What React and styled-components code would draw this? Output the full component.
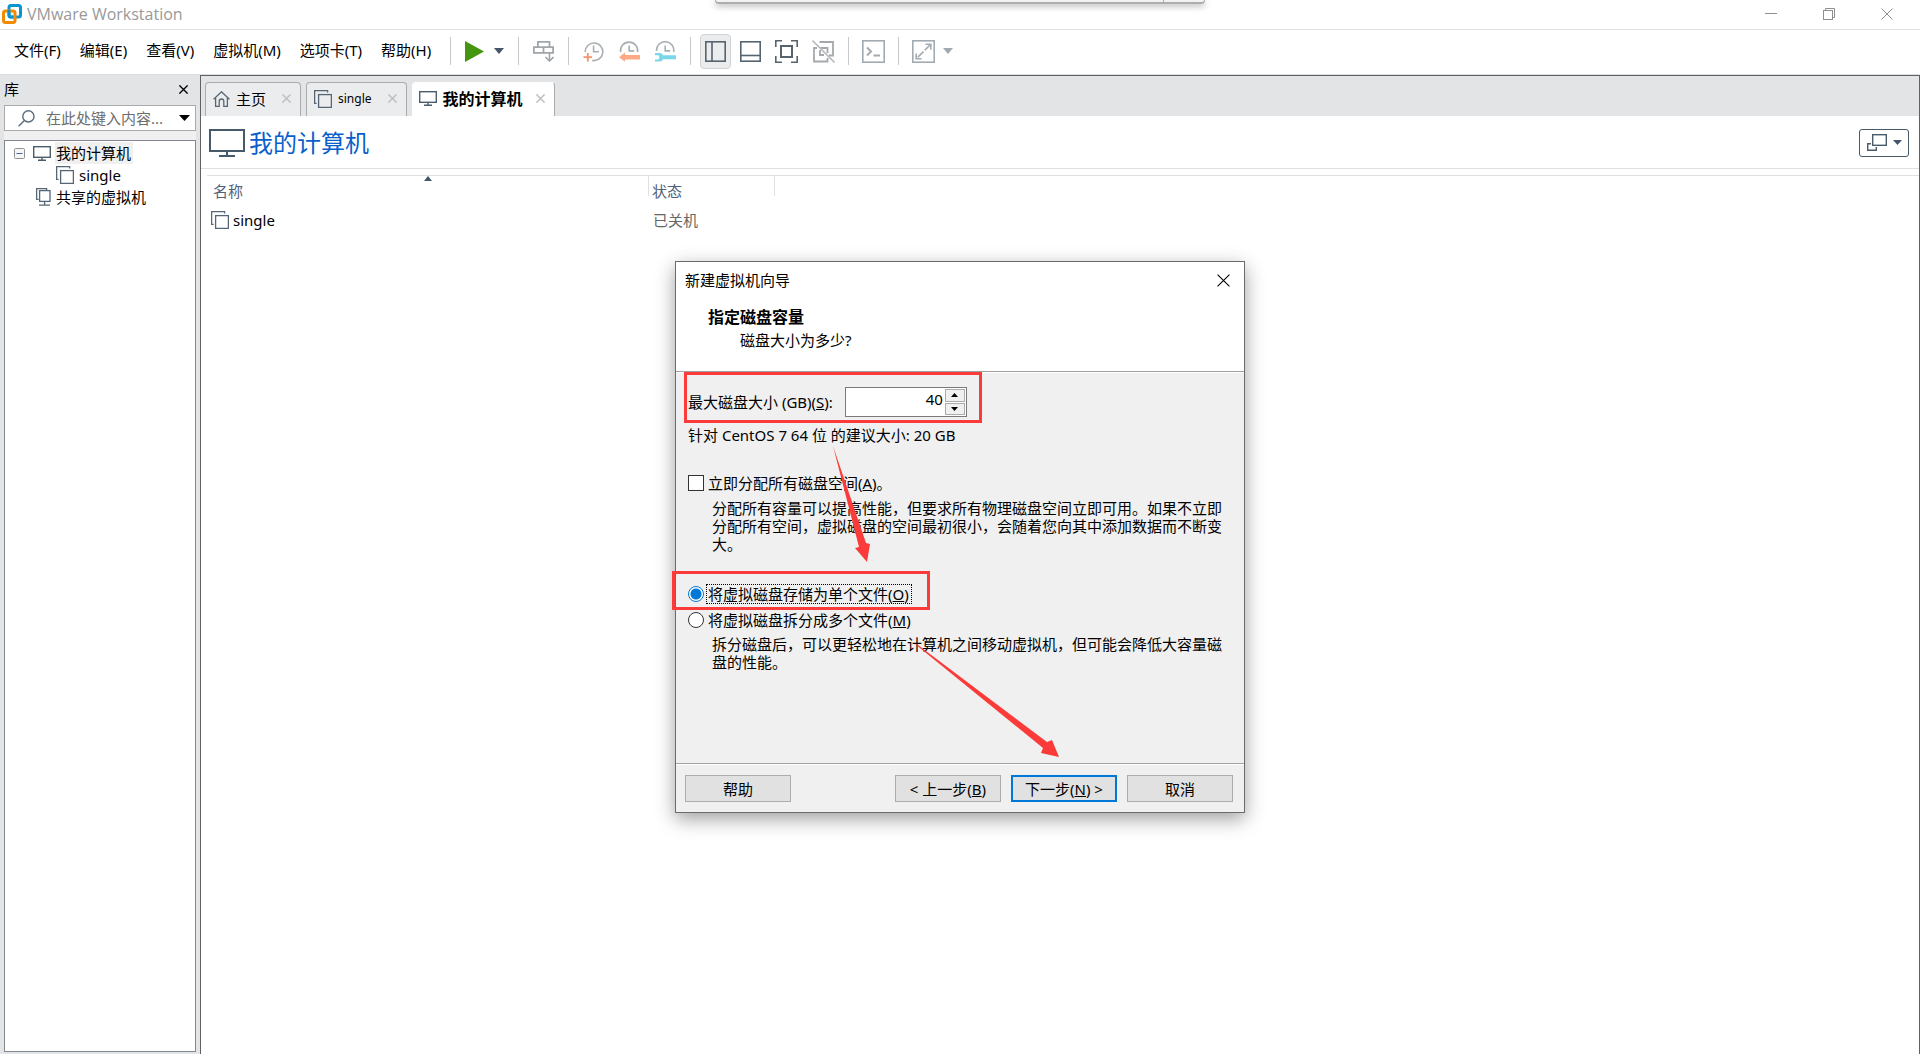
import React from "react";
import styled, { createGlobalStyle, css } from "styled-components";

const GlobalStyle = createGlobalStyle`
  * {
    box-sizing: border-box;
  }

  body {
    margin: 0;
    background: #fff;
    color: #000;
    font-family: "Noto Sans", "Noto Sans CJK SC", sans-serif;
    font-size: 15px;
    line-height: 20px;
  }

  button,
  input {
    font: inherit;
    color: inherit;
  }

  button {
    padding: 0;
    border: 0;
    background: none;
  }

  svg {
    display: block;
    flex: none;
    fill: none;
  }
`;

/* ---------- icons ---------- */

const Logo = () => (
  <svg width="20" height="20" viewBox="0 0 20 20">
    <rect x="7" y="1.5" width="11.5" height="11.5" rx="2" stroke="#0795d3" strokeWidth="3" />
    <rect x="1.5" y="7" width="11.5" height="11.5" rx="2" stroke="#f38b00" strokeWidth="3" />
    <path d="M7 6v5a2 2 0 0 0 2 2h2" stroke="#0795d3" strokeWidth="3" />
  </svg>
);

const Cross = ({ size = 12, color = "#000", width = 1 }) => (
  <svg width={size} height={size} viewBox="0 0 12 12" stroke={color} strokeWidth={width}>
    <path d="M.5.5l11 11M11.5.5l-11 11" />
  </svg>
);

const Caret = ({ color = "#43556a", width = 10, height = 6 }) => (
  <svg width={width} height={height} viewBox="0 0 10 6" preserveAspectRatio="none">
    <path d="M0 0h10L5 6z" fill={color} />
  </svg>
);

const Monitor = () => (
  <svg width="18" height="15" viewBox="0 0 18 15" stroke="#4b5c6b" strokeWidth="1.4">
    <rect x=".7" y=".7" width="16.6" height="10.6" fill="#fff" />
    <path d="M9 11v3M5 14.2h8" />
  </svg>
);

const BigMonitor = () => (
  <svg width="36" height="28" viewBox="0 0 36 28" stroke="#465a69" strokeWidth="2">
    <rect x="1" y="1" width="34" height="21" />
    <path d="M18 22v4M10 27h16" />
  </svg>
);

const Machine = () => (
  <svg width="18" height="18" viewBox="0 0 18 18" stroke="#566675" strokeWidth="1.3">
    <path d="M2.6 13.4H.6V.6h13v2" />
    <rect x="4.6" y="4.6" width="12.8" height="12.8" />
  </svg>
);

const SharedMachine = () => (
  <svg width="15" height="18" viewBox="0 0 15 18" stroke="#566675" strokeWidth="1.3">
    <path d="M2.6 11.4h-2V.6h10v2" />
    <rect x="3.6" y="2.6" width="10.4" height="10.8" />
    <path d="M8.6 13.4v3.4M3 17.2h11" />
  </svg>
);

const Home = () => (
  <svg width="17" height="16" viewBox="0 0 17 16" stroke="#566675" strokeWidth="1.3">
    <path d="M.6 8.2l7.9-7.4 7.9 7.4M2.6 7v8.3h3.6v-5a2.3 2.3 0 0 1 4.6 0v5h3.6V7" />
  </svg>
);

const Search = () => (
  <svg width="17" height="17" viewBox="0 0 17 17" stroke="#5a6b7b" strokeWidth="1.4">
    <circle cx="10.4" cy="6.4" r="5.6" />
    <path d="M6.4 10.6L.6 16.2" />
  </svg>
);

const Collapse = () => (
  <svg width="11" height="11" viewBox="0 0 11 11">
    <rect x=".5" y=".5" width="10" height="10" rx="1" stroke="#919191" fill="#f6f6f6" />
    <path d="M2.5 5.5h6" stroke="#4b63a7" />
  </svg>
);

const Play = () => (
  <svg width="19" height="21" viewBox="0 0 19 21">
    <path d="M0 0l19 10.5L0 21z" fill="#45960f" />
  </svg>
);

const SendKeys = () => (
  <svg width="21" height="21" viewBox="0 0 21 21" stroke="#a0a5a9" strokeWidth="1.8">
    <path d="M4.9 5.500V.9h11.600v4.600M.9 6.100h19.200v5.800H.9zM10.500 6v6" />
    <path d="M16.500 12v7M12.500 16l4 4 4-4" strokeWidth="1.600" />
  </svg>
);

const SnapshotAdd = () => (
  <svg width="21" height="21" viewBox="0 0 21 21" stroke="#a9aeb2" strokeWidth="1.6">
    <path d="M2.2 11a8.8 8.8 0 1 1 7 8.4M10.600 4.500v6.200H16" />
    <path d="M4.800 12v8.400M.5 16.200h8.600" stroke="#f5936c" strokeWidth="1.800" />
  </svg>
);

const SnapshotRevert = () => (
  <svg width="21" height="21" viewBox="0 0 21 21" stroke="#a9aeb2" strokeWidth="1.6">
    <path d="M1.600 11a8.600 8.600 0 1 1 17 0M10.200 4.500v5.400h5" />
    <path d="M0 16.200l6-4.600V14h15v4.400H6v2.400z" fill="#fda985" stroke="none" />
  </svg>
);

const SnapshotManage = () => (
  <svg width="21" height="21" viewBox="0 0 21 21" stroke="#a9aeb2" strokeWidth="1.6">
    <path d="M1.600 10a8.600 8.600 0 1 1 17 1M10.200 4.500v5.400h5" />
    <path
      d="M0 12h4.400a4.300 4.300 0 0 1 3.800 2.200H21v4H8.200a4.300 4.300 0 0 1-3.800 2.400H0v-2.200h3.500l1-2.100-1-2.100H0z"
      fill="#7ad7ea"
      stroke="none"
    />
  </svg>
);

const LibraryPane = () => (
  <svg width="21" height="21" viewBox="0 0 21 21" stroke="#56646f" strokeWidth="1.6">
    <rect x=".8" y=".8" width="19.4" height="19.4" />
    <path d="M7 1v19" />
  </svg>
);

const ThumbnailPane = () => (
  <svg width="21" height="21" viewBox="0 0 21 21" stroke="#56646f" strokeWidth="1.6">
    <rect x=".8" y=".8" width="19.4" height="19.4" />
    <path d="M1 14.5h19" />
  </svg>
);

const FullScreen = () => (
  <svg width="23" height="23" viewBox="0 0 23 23" stroke="#56646f" strokeWidth="1.6">
    <path d="M.8 7V.8H7M16 .8h6.200V7M22.200 16v6.200H16M7 22.200H.8V16" />
    <rect x="6" y="6" width="11" height="11" strokeWidth="2" />
  </svg>
);

const Unity = () => (
  <svg width="23" height="23" viewBox="0 0 23 23" stroke="#a4a9ad" strokeWidth="1.8">
    <path d="M7.500 2h13.500v13.500H17M5 8H2v13.500h13.500V18M8 8h7.500v5M8 10v5h4" />
    <path d="M.5.5l22 22" stroke="#b9bdc0" strokeWidth="1.6" />
  </svg>
);

const Console = () => (
  <svg width="23" height="23" viewBox="0 0 23 23" stroke="#a3abb2" strokeWidth="1.6">
    <rect x=".8" y=".8" width="21.4" height="21.4" />
    <path d="M5 7.500l4 4-4 4M11.500 15.500H18" strokeWidth="2" />
  </svg>
);

const Stretch = () => (
  <svg width="23" height="23" viewBox="0 0 23 23" stroke="#a3abb2" strokeWidth="1.6">
    <rect x=".8" y=".8" width="21.4" height="21.4" />
    <path d="M13.500 4.200h5.300v5.300M9.500 18.800H4.200v-5.300" />
    <path d="M18.500 4.500l-14 14" strokeDasharray="8 2" />
  </svg>
);

const ViewMode = () => (
  <svg width="20" height="17" viewBox="0 0 20 17" stroke="#4a5c6b" strokeWidth="1.4">
    <rect x="5.7" y=".7" width="13.6" height="10.6" />
    <path d="M4 9.700H.7v6.600h8.600V13" />
  </svg>
);

/* ---------- window frame ---------- */

const Window = styled.div`
  position: relative;
  min-height: 100vh;
  display: flex;
  flex-direction: column;
`;

const TitleBar = styled.header`
  height: 30px;
  padding: 0 21px 2px 2px;
  display: flex;
  align-items: center;
  gap: 5px;
  border-bottom: 1px solid #e1e1e1;
`;

const AppName = styled.h1`
  margin: 0;
  flex: 1;
  font-family: "Open Sans", sans-serif;
  font-weight: 400;
  font-size: 16px;
  color: #999;
`;

const WindowButtons = styled.div`
  display: flex;
  gap: 34px;
`;

const WindowButton = styled.button`
  width: 24px;
  height: 24px;
  display: grid;
  place-items: center;
`;

const DropBar = styled.div`
  position: absolute;
  top: 0;
  left: 50%;
  width: 490px;
  height: 4px;
  margin-left: -245px;
  padding-right: 40px;
  border: solid #adadad;
  border-width: 0 1px 2px;
  border-radius: 0 0 10px 10px;
  background: #f2f2f2;
  box-shadow: 0 2px 6px rgba(0, 0, 0, 0.35);

  &::before {
    content: "";
    display: block;
    height: 2px;
    border-right: 1px solid #adadad;
  }
`;

const ToolBar = styled.nav`
  height: 45px;
  padding: 0 0 2px 4px;
  display: flex;
  align-items: center;
  border-bottom: 1px solid #dcdddf;
`;

const MenuButton = styled.button`
  height: 28px;
  padding: 0 9px 2px 10px;
  white-space: nowrap;

  &:last-of-type {
    margin-right: 0;
  }
`;

const Menus = styled.div`
  display: flex;
  margin-right: -4px;
`;

const Separator = styled.span`
  width: 1px;
  height: 28px;
  margin: 0 ${({ $gap = 14 }) => $gap}px;
  background: #c8c9cb;
`;

const Tools = styled.div`
  display: flex;
  align-items: center;
  gap: ${({ $gap = 15 }) => $gap}px;
`;

const Tool = styled.button`
  height: 35px;
  display: grid;
  place-items: center;

  ${({ $active }) =>
    $active &&
    css`
      width: 31px;
      margin: 0 -5px;
      border: 1px solid #d2d3d5;
      border-radius: 4px;
      background: #ebecee;
    `}
`;

const Workspace = styled.div`
  flex: 1;
  display: flex;
`;

/* ---------- library ---------- */

const Library = styled.aside`
  width: 200px;
  padding: 0 4px 2px;
  display: flex;
  flex-direction: column;
  background: #e3e4e6;
`;

const LibraryHead = styled.div`
  height: 30px;
  padding: 0 8px 2px 0;
  display: flex;
  align-items: center;
  justify-content: space-between;
`;

const SearchBox = styled.label`
  height: 26px;
  padding: 0 5px 0 13px;
  display: flex;
  align-items: center;
  border: 1px solid #a9abad;
  background: #fff;
`;

const SearchInput = styled.input`
  flex: 1;
  min-width: 0;
  margin: 0 8px 0 11px;
  padding: 0;
  border: 0;
  outline: 0;
  background: none;
  text-overflow: ellipsis;

  &::placeholder {
    color: #6d6d6d;
    opacity: 1;
  }
`;

const Tree = styled.ul`
  flex: 1;
  margin: 0;
  padding: 1px 0 0 9px;
  list-style: none;
  border: 1px solid #828790;
  background: #fff;
`;

const TreeGap = styled.div`
  height: 9px;
  background: #f0f0f0;
`;

const TreeItem = styled.li`
  height: 22px;
  padding-left: ${({ $indent = 0 }) => $indent}px;
  display: flex;
  align-items: center;
  gap: 4px;
`;

const TreeLabel = styled.span`
  padding: 1px 2px 1px 1px;
  background: ${({ $selected }) => ($selected ? "#f0f0f0" : "none")};
`;

const TreeToggle = styled.button`
  margin-right: 4px;
`;

/* ---------- main area ---------- */

const Main = styled.main`
  flex: 1;
  min-width: 0;
  border: solid #5f6163;
  border-width: 1px 1px 0;
`;

const TabBar = styled.div`
  height: 40px;
  padding: 6px 4px 0;
  display: flex;
  gap: 5px;
  background: #e3e4e6;
`;

const Tab = styled.div`
  height: 34px;
  padding: 0 9px 2px 7px;
  display: flex;
  align-items: center;
  border: 1px solid #a9abad;
  border-bottom: 0;
  border-radius: 4px 4px 0 0;
  background: #ebecee;

  ${({ $active }) =>
    $active &&
    css`
      padding-left: 6px;
      border-left-color: #fff;
      border-top-color: #fff;
      background: #fff;
    `}
`;

const TabName = styled.button`
  display: flex;
  align-items: center;
  gap: 6px;
  margin-right: ${({ $gap = 16 }) => $gap}px;
  font-size: ${({ $size = 15 }) => $size}px;
  font-weight: ${({ $bold }) => ($bold ? 700 : 400)};
`;

const PageHead = styled.div`
  height: 53px;
  padding: 1px 10px 0 8px;
  display: flex;
  align-items: center;
  gap: 4px;
  border-bottom: 1px solid #dfe0e1;
`;

const PageTitle = styled.h2`
  margin: 0;
  flex: 1;
  font-weight: 400;
  font-size: 24px;
  line-height: 32px;
  color: #0a5fcb;
`;

const ViewButton = styled.button`
  width: 50px;
  height: 28px;
  display: flex;
  align-items: center;
  justify-content: center;
  gap: 6px;
  border: 1px solid #465a69;
  border-radius: 3px;
`;

const TableWrap = styled.div`
  margin: 6px 0 0 6px;
  border-top: 1px solid #dfe0e1;
`;

const Table = styled.table`
  width: 100%;
  border-collapse: collapse;
  table-layout: fixed;
`;

const HeadCell = styled.th`
  position: relative;
  width: ${({ $width }) => ($width ? `${$width}px` : "auto")};
  height: 30px;
  padding: 0 4px 0 ${({ $inset = 3 }) => $inset}px;
  text-align: left;
  font-weight: 400;
  color: #4f6078;

  &::after {
    content: "";
    position: absolute;
    top: 0;
    right: 0;
    width: ${({ $width }) => ($width ? 1 : 0)}px;
    height: 20px;
    background: #dfe0e1;
  }
`;

const SortMark = styled.span`
  position: absolute;
  top: 0;
  left: 50%;
  margin-left: -4px;
  border: solid transparent;
  border-width: 0 4px 5px;
  border-bottom-color: #43556a;
`;

const Cell = styled.td`
  height: 28px;
  padding: 0 4px;
  color: ${({ $muted }) => ($muted ? "#666" : "#000")};
`;

const MachineName = styled.span`
  display: flex;
  align-items: center;
  gap: 4px;
`;

/* ---------- wizard ---------- */

const Overlay = styled.div`
  position: absolute;
  inset: 0;
  padding-top: 20px;
  display: grid;
  place-items: center;
`;

const Dialog = styled.form`
  position: relative;
  width: 570px;
  border: 1px solid #6b6b6b;
  background: #f0f0f0;
  box-shadow: 0 6px 18px rgba(0, 0, 0, 0.38);
`;

const DialogHead = styled.div`
  height: 110px;
  padding: 8px 14px 0 9px;
  border-bottom: 1px solid #a0a0a0;
  background: #fff;
`;

const DialogTitle = styled.div`
  height: 20px;
  display: flex;
  align-items: center;
  justify-content: space-between;
`;

const StepTitle = styled.h3`
  margin: 17px 0 0 23px;
  font-size: 16px;
  line-height: 20px;
`;

const StepHint = styled.p`
  margin: 3px 0 0 55px;
  line-height: 20px;
`;

const DialogBody = styled.div`
  height: 392px;
  padding: 14px 12px 0;
  border-top: 1px solid #fff;
  border-bottom: 1px solid #a0a0a0;
`;

const SizeRow = styled.div`
  height: 30px;
  display: flex;
  align-items: center;
  gap: 12px;
`;

const Spinner = styled.div`
  width: 122px;
  height: 30px;
  padding: 1px;
  display: flex;
  border: 1px solid #7a7a7a;
  background: #fff;
`;

const SizeInput = styled.input`
  flex: 1;
  min-width: 0;
  padding: 0 2px 6px;
  border: 0;
  outline: 0;
  text-align: right;
`;

const Arrows = styled.div`
  width: 20px;
  display: grid;
  gap: 1px;
`;

const ArrowButton = styled.button`
  display: grid;
  place-items: center;
  border: 1px solid #acacac;
  background: #f0f0f0;
`;

const Recommend = styled.p`
  margin: 8px 0 28px;
`;

const Option = styled.label`
  width: max-content;
  height: 20px;
  margin-bottom: ${({ $below = 6 }) => $below}px;
  display: flex;
  align-items: center;
  gap: 3px;
`;

const OptionText = styled.span`
  padding: 0 2px 0 1px;
  line-height: 18px;
  outline: ${({ $focused }) => ($focused ? "1px dotted #000" : "none")};
`;

const Choice = styled.input`
  appearance: none;
  width: 16px;
  height: 16px;
  margin: 0;
  border: 1px solid #333;
  border-radius: ${({ type }) => (type === "radio" ? "50%" : 0)};
  background: #fff;

  &:checked {
    border-color: #0078d7;
    background: radial-gradient(circle, #0078d7 5px, #fff 6px);
  }
`;

const Explain = styled.p`
  margin: 0 10px ${({ $below = 0 }) => $below}px 24px;
  line-height: 18px;
`;

const DialogFoot = styled.div`
  height: 48px;
  padding: 10px 11px 0 9px;
  display: flex;
  gap: 10px;
  border-top: 1px solid #fff;
`;

const WizardButton = styled.button`
  width: 106px;
  height: 27px;
  border: ${({ $primary }) => ($primary ? "2px solid #0078d7" : "1px solid #adadad")};
  background: #e1e1e1;

  &:first-child {
    margin-right: auto;
  }
`;

/* red markup drawn over the wizard */
const Frame = styled.div`
  position: absolute;
  left: ${({ $x }) => $x}px;
  top: ${({ $y }) => $y}px;
  width: ${({ $w }) => $w}px;
  height: ${({ $h }) => $h}px;
  border: 3px solid #fb3b3a;
  pointer-events: none;
`;

const Pointers = styled.svg`
  position: absolute;
  left: 0;
  top: 0;
  pointer-events: none;
`;

const menus = ["文件(F)", "编辑(E)", "查看(V)", "虚拟机(M)", "选项卡(T)", "帮助(H)"];

const App = () => (
  <>
    <GlobalStyle />
    <Window>
      <TitleBar>
        <Logo />
        <AppName>VMware Workstation</AppName>
        <WindowButtons>
          <WindowButton aria-label="最小化">
            <svg width="12" height="1">
              <path d="M0 .5h12" stroke="#8f8f8f" />
            </svg>
          </WindowButton>
          <WindowButton aria-label="还原">
            <svg width="12" height="12" stroke="#8f8f8f">
              <rect x=".5" y="2.5" width="9" height="9" />
              <path d="M2.500 2.500v-2h9v9h-2" />
            </svg>
          </WindowButton>
          <WindowButton aria-label="关闭">
            <Cross color="#8f8f8f" />
          </WindowButton>
        </WindowButtons>
      </TitleBar>
      <DropBar />

      <ToolBar>
        <Menus>
          {menus.map((menu) => (
            <MenuButton key={menu}>{menu}</MenuButton>
          ))}
        </Menus>
        <Separator />
        <Tools $gap={10}>
          <Tool aria-label="开机">
            <Play />
          </Tool>
          <Tool aria-label="电源选项">
            <Caret />
          </Tool>
        </Tools>
        <Separator />
        <Tool aria-label="发送按键">
          <SendKeys />
        </Tool>
        <Separator />
        <Tools>
          <Tool aria-label="拍摄快照">
            <SnapshotAdd />
          </Tool>
          <Tool aria-label="恢复快照">
            <SnapshotRevert />
          </Tool>
          <Tool aria-label="管理快照">
            <SnapshotManage />
          </Tool>
        </Tools>
        <Separator />
        <Tools $gap={14}>
          <Tool $active aria-label="显示库">
            <LibraryPane />
          </Tool>
          <Tool aria-label="缩略图栏">
            <ThumbnailPane />
          </Tool>
          <Tool aria-label="全屏">
            <FullScreen />
          </Tool>
          <Tool aria-label="Unity">
            <Unity />
          </Tool>
        </Tools>
        <Separator $gap={13} />
        <Tool aria-label="控制台">
          <Console />
        </Tool>
        <Separator $gap={13} />
        <Tools $gap={8}>
          <Tool aria-label="自由拉伸">
            <Stretch />
          </Tool>
          <Tool aria-label="拉伸选项">
            <Caret color="#a0a9b1" />
          </Tool>
        </Tools>
      </ToolBar>

      <Workspace>
        <Library>
          <LibraryHead>
            <span>库</span>
            <button aria-label="关闭库">
              <Cross size={9} width={1.8} />
            </button>
          </LibraryHead>
          <SearchBox>
            <Search />
            <SearchInput aria-label="搜索" placeholder="在此处键入内容..." />
            <Caret color="#000" width={11} />
          </SearchBox>
          <TreeGap />
          <Tree>
            <TreeItem>
              <TreeToggle aria-label="折叠">
                <Collapse />
              </TreeToggle>
              <Monitor />
              <TreeLabel $selected>我的计算机</TreeLabel>
            </TreeItem>
            <TreeItem $indent={42}>
              <Machine />
              <TreeLabel>single</TreeLabel>
            </TreeItem>
            <TreeItem $indent={22}>
              <SharedMachine />
              <TreeLabel>共享的虚拟机</TreeLabel>
            </TreeItem>
          </Tree>
        </Library>

        <Main>
          <TabBar>
            <Tab>
              <TabName>
                <Home />
                主页
              </TabName>
              <button aria-label="关闭主页">
                <Cross size={9} color="#bfbfbf" width={2} />
              </button>
            </Tab>
            <Tab>
              <TabName $size={12}>
                <Machine />
                single
              </TabName>
              <button aria-label="关闭 single">
                <Cross size={9} color="#bfbfbf" width={2} />
              </button>
            </Tab>
            <Tab $active>
              <TabName $size={16} $gap={13} $bold>
                <Monitor />
                我的计算机
              </TabName>
              <button aria-label="关闭我的计算机">
                <Cross size={9} color="#bfbfbf" width={2} />
              </button>
            </Tab>
          </TabBar>

          <PageHead>
            <BigMonitor />
            <PageTitle>我的计算机</PageTitle>
            <ViewButton aria-label="视图">
              <ViewMode />
              <Caret width={9} height={5} />
            </ViewButton>
          </PageHead>

          <TableWrap>
            <Table>
              <thead>
                <tr>
                  <HeadCell $width={442} $inset={6}>
                    名称
                    <SortMark />
                  </HeadCell>
                  <HeadCell $width={126}>状态</HeadCell>
                  <HeadCell />
                </tr>
              </thead>
              <tbody>
                <tr>
                  <Cell>
                    <MachineName>
                      <Machine />
                      single
                    </MachineName>
                  </Cell>
                  <Cell $muted>已关机</Cell>
                  <Cell />
                </tr>
              </tbody>
            </Table>
          </TableWrap>
        </Main>
      </Workspace>

      <Overlay>
        <Dialog onSubmit={(e) => e.preventDefault()}>
          <DialogHead>
            <DialogTitle>
              新建虚拟机向导
              <button type="button" aria-label="关闭向导">
                <Cross size={13} />
              </button>
            </DialogTitle>
            <StepTitle>指定磁盘容量</StepTitle>
            <StepHint>磁盘大小为多少?</StepHint>
          </DialogHead>

          <DialogBody>
            <SizeRow>
              <label htmlFor="size">
                最大磁盘大小 (GB)(<u>S</u>):
              </label>
              <Spinner>
                <SizeInput id="size" defaultValue="40" />
                <Arrows>
                  <ArrowButton type="button" aria-label="增加">
                    <svg width="7" height="4">
                      <path d="M0 4h7L3.500 0z" fill="#000" />
                    </svg>
                  </ArrowButton>
                  <ArrowButton type="button" aria-label="减少">
                    <svg width="7" height="4">
                      <path d="M0 0h7L3.500 4z" fill="#000" />
                    </svg>
                  </ArrowButton>
                </Arrows>
              </Spinner>
            </SizeRow>
            <Recommend>针对 CentOS 7 64 位 的建议大小: 20 GB</Recommend>
            <Option>
              <Choice type="checkbox" />
              <OptionText>
                立即分配所有磁盘空间(<u>A</u>)。
              </OptionText>
            </Option>
            <Explain $below={31}>
              分配所有容量可以提高性能，但要求所有物理磁盘空间立即可用。如果不立即分配所有空间，虚拟磁盘的空间最初很小，会随着您向其中添加数据而不断变大。
            </Explain>
            <Option>
              <Choice type="radio" name="store" defaultChecked />
              <OptionText $focused>
                将虚拟磁盘存储为单个文件(<u>O</u>)
              </OptionText>
            </Option>
            <Option $below={5}>
              <Choice type="radio" name="store" />
              <OptionText>
                将虚拟磁盘拆分成多个文件(<u>M</u>)
              </OptionText>
            </Option>
            <Explain>
              拆分磁盘后，可以更轻松地在计算机之间移动虚拟机，但可能会降低大容量磁盘的性能。
            </Explain>
          </DialogBody>

          <DialogFoot>
            <WizardButton type="button">帮助</WizardButton>
            <WizardButton type="button">
              &lt; 上一步(<u>B</u>)
            </WizardButton>
            <WizardButton $primary>
              下一步(<u>N</u>) &gt;
            </WizardButton>
            <WizardButton type="button">取消</WizardButton>
          </DialogFoot>

          <Frame $x={8} $y={110} $w={298} $h={51} />
          <Frame $x={-4} $y={309} $w={258} $h={39} />
          <Pointers width="568" height="549">
            <path
              d="M157 184L190 281l4 1-3 18-12-14 4-1zM239 382l3 1L371 480l5-2 7 17-18-4 2-5z"
              fill="#fb3b3a"
            />
          </Pointers>
        </Dialog>
      </Overlay>
    </Window>
  </>
);

export default App;
